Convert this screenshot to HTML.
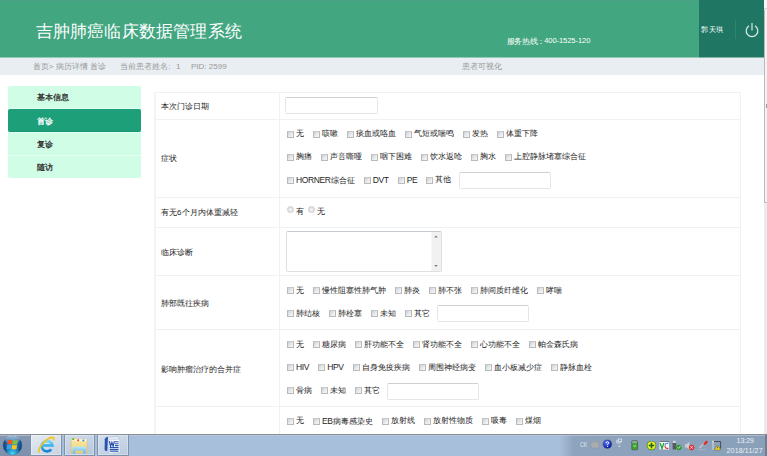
<!DOCTYPE html>
<html><head><meta charset="utf-8">
<style>
*{margin:0;padding:0;box-sizing:border-box}
html,body{width:767px;height:456px;overflow:hidden;background:#fff;font-family:"Liberation Sans",sans-serif;color:#333}
.a{position:absolute}
.t{position:absolute;font-size:8px;line-height:12px;white-space:nowrap;color:#1e1e1e}
#hdr{position:absolute;left:0;top:0;width:764px;height:57px;background:#42a681}
#title{position:absolute;left:35.5px;top:18.5px;font-size:17.45px;letter-spacing:.22px;line-height:24px;color:#fff;white-space:nowrap}
#hot{position:absolute;left:506.5px;top:35.6px;font-size:7.5px;line-height:12px;color:#fff;white-space:nowrap;letter-spacing:-.25px}
#hot2{position:absolute;left:544.2px;top:35.3px;font-size:7.5px;line-height:12px;color:#fff;white-space:nowrap;letter-spacing:-.05px}
#ubox{position:absolute;left:699px;top:0;width:65px;height:57px;background:#1f7763}
#uname{position:absolute;left:701.3px;top:24.3px;font-size:7px;letter-spacing:.35px;line-height:12px;color:#fff;white-space:nowrap}
#usep{position:absolute;left:735px;top:20px;width:1px;height:19px;background:#2f8370}
#bc{position:absolute;left:0;top:57px;width:764px;height:18px;background:#e8eef1}
.bct{position:absolute;top:60.5px;font-size:8px;line-height:12px;color:#999;white-space:nowrap}
.nav{position:absolute;left:8px;width:133px;height:22px;background:#d0fde6;border-radius:2px}
.nav span{position:absolute;left:29px;top:6px;font-size:8px;line-height:12px;font-weight:bold;color:#333;white-space:nowrap}
.nav.on{background:#1d9f7a}
.nav.on span{color:#fff}
#tbl{position:absolute;left:154px;top:91.5px;width:587px;height:400px;border:1px solid #f0f1f2;border-left:2px solid #f3f4f4}
.hl{position:absolute;left:155px;width:585px;height:1px;background:#f0f1f2}
#vl{position:absolute;left:279px;top:92px;width:1px;height:342px;background:#f0f1f2}
.cb{position:absolute;width:7px;height:7px;border:1px solid #bababa;border-top-color:#c6c6c6;background:linear-gradient(135deg,#cbcfd6 0%,#e6e8eb 50%,#f7f7f7 100%)}
.lt{font-weight:normal;font-size:8.5px;letter-spacing:-.38px;position:relative;top:-.5px}
.rd{position:absolute;width:7px;height:7px;border-radius:50%;border:1px solid #cdcdcd;background:radial-gradient(circle at 50% 55%,#f6f6f6 0,#e6e6e6 50%,#cfcfcf 100%)}
.inp{position:absolute;width:92px;height:17px;border:1px solid #e4e6e9;border-top-color:#cdd0d5;border-radius:2px;background:#fff}
#sb{position:absolute;left:764px;top:0;width:3px;height:434px;background:#ebebeb}
#task{position:absolute;left:0;top:434px;width:767px;height:22px;background:#a7bfda;border-top:1px solid #8a8d92}
.tbtn{position:absolute;top:434px;height:22px;border:1px solid #7f92ab;border-top-color:#8a8f96;border-radius:1.5px;background:linear-gradient(160deg,#e6ebf1,#c6d3e1);box-shadow:inset 0 0 0 .5px rgba(255,255,255,.6)}
</style></head><body>
<div id="hdr"></div>
<div class="a" style="left:0;top:0;width:699px;height:1px;background:#47a086"></div>
<div id="title">吉肿肺癌临床数据管理系统</div>
<div id="hot">服务热线</div><div id="hot" style="left:537.3px">：</div><div id="hot2">400-1525-120</div>
<div id="ubox"></div>
<div id="uname">郭天琪</div>
<div id="usep"></div>
<svg class="a" style="left:744px;top:22px" width="16" height="16" viewBox="0 0 16 16"><path d="M5 3.9 A5.8 5.8 0 1 0 11 3.9" fill="none" stroke="#d3e8e1" stroke-width="1.25"/><line x1="8" y1="1" x2="8" y2="8.4" stroke="#cfe6de" stroke-width="1.25"/></svg>
<div id="bc"></div>
<div class="a" style="left:0;top:57px;width:699px;height:1px;background:#95cab6"></div>
<div class="a" style="left:699px;top:57px;width:65px;height:1px;background:#84b3a9"></div>
<span class="bct" style="left:32.8px">首页&gt; 病历详情 首诊</span>
<span class="bct" style="left:120.2px">当前患者姓名:</span>
<span class="bct" style="left:176px">1</span>
<span class="bct" style="left:191px">PID: 2599</span>
<span class="bct" style="left:462px">患者可视化</span>

<div class="nav" style="top:86px;height:92px"></div>
<div class="a" style="left:8px;top:108px;width:133px;height:1px;background:#e2fef1"></div>
<div class="a" style="left:8px;top:132px;width:133px;height:1px;background:#e2fef1"></div>
<div class="a" style="left:8px;top:155px;width:133px;height:1px;background:#e6fff4"></div>
<div class="nav on" style="top:109px;height:23px;border-radius:2px;border-bottom:1px solid #189576"></div>
<div class="nav" style="top:86px;background:none"><span>基本信息</span></div>
<div class="nav on" style="top:109.5px;background:none"><span>首诊</span></div>
<div class="nav" style="top:133px;background:none"><span>复诊</span></div>
<div class="nav" style="top:156.3px;height:21.5px;background:none"><span>随访</span></div>

<div id="tbl"></div>
<div class="hl" style="top:119px"></div>
<div class="hl" style="top:197px"></div>
<div class="hl" style="top:227px"></div>
<div class="hl" style="top:275px"></div>
<div class="hl" style="top:329px"></div>
<div class="hl" style="top:406px"></div>
<div id="vl"></div>

<span class="t" style="left:161px;top:101.0px">本次门诊日期</span>
<span class="t" style="left:161px;top:153.0px">症状</span>
<span class="t" style="left:161px;top:207.0px">有无<b style="font-weight:normal;letter-spacing:1px">6</b>个月内体重减轻</span>
<span class="t" style="left:161px;top:247.0px">临床诊断</span>
<span class="t" style="left:161px;top:297.5px">肺部既往疾病</span>
<span class="t" style="left:161px;top:363.5px">影响肿瘤治疗的合并症</span>

<i class="inp" style="left:285px;top:97px;width:93px"></i>

<i class="rd" style="left:287px;top:205.8px"></i>
<span class="t" style="left:296px;top:206px">有</span>
<i class="rd" style="left:308px;top:205.8px"></i>
<span class="t" style="left:317px;top:206px">无</span>

<div class="a" style="left:285.5px;top:231px;width:156px;height:40.5px;border:1px solid #dcdfe4;border-top-color:#c5c9d1;border-radius:2px;background:#fff"></div>
<div class="a" style="left:431px;top:232px;width:10px;height:38.5px;background:#f1f1f1;border-left:1px solid #f7f7f7"></div>
<svg class="a" style="left:431px;top:233px" width="10" height="37" viewBox="0 0 10 37"><path d="M3.2 4.6 L5 2.6 L6.8 4.6 Z" fill="#7a7a7a"/><path d="M3.2 32 L5 34 L6.8 32 Z" fill="#7a7a7a"/></svg>

<i class="cb" style="left:287.0px;top:130.8px"></i>
<span class="t" style="left:296.0px;top:128.3px">无</span>
<i class="cb" style="left:313.0px;top:130.8px"></i>
<span class="t" style="left:322.0px;top:128.3px">咳嗽</span>
<i class="cb" style="left:347.0px;top:130.8px"></i>
<span class="t" style="left:356.0px;top:128.3px">痰血或咯血</span>
<i class="cb" style="left:405.0px;top:130.8px"></i>
<span class="t" style="left:414.0px;top:128.3px">气短或喘鸣</span>
<i class="cb" style="left:463.0px;top:130.8px"></i>
<span class="t" style="left:472.0px;top:128.3px">发热</span>
<i class="cb" style="left:497.0px;top:130.8px"></i>
<span class="t" style="left:506.0px;top:128.3px">体重下降</span>
<i class="cb" style="left:287.0px;top:153.7px"></i>
<span class="t" style="left:296.0px;top:151.2px">胸痛</span>
<i class="cb" style="left:321.0px;top:153.7px"></i>
<span class="t" style="left:330.0px;top:151.2px">声音嘶哑</span>
<i class="cb" style="left:371.0px;top:153.7px"></i>
<span class="t" style="left:380.0px;top:151.2px">咽下困难</span>
<i class="cb" style="left:421.0px;top:153.7px"></i>
<span class="t" style="left:430.0px;top:151.2px">饮水返呛</span>
<i class="cb" style="left:471.0px;top:153.7px"></i>
<span class="t" style="left:480.0px;top:151.2px">胸水</span>
<i class="cb" style="left:505.0px;top:153.7px"></i>
<span class="t" style="left:514.0px;top:151.2px">上腔静脉堵塞综合征</span>
<i class="cb" style="left:287.0px;top:176.7px"></i>
<span class="t" style="left:296.0px;top:174.2px"><b class="lt">HORNER</b>综合征</span>
<i class="cb" style="left:363.7px;top:176.7px"></i>
<span class="t" style="left:372.7px;top:174.2px"><b class="lt">DVT</b></span>
<i class="cb" style="left:397.7px;top:176.7px"></i>
<span class="t" style="left:406.7px;top:174.2px"><b class="lt">PE</b></span>
<i class="cb" style="left:426.3px;top:176.7px"></i>
<span class="t" style="left:435.3px;top:174.2px">其他</span>
<i class="inp" style="left:458.6px;top:172.0px"></i>
<i class="cb" style="left:287.0px;top:287.0px"></i>
<span class="t" style="left:296.0px;top:284.5px">无</span>
<i class="cb" style="left:313.0px;top:287.0px"></i>
<span class="t" style="left:322.0px;top:284.5px">慢性阻塞性肺气肿</span>
<i class="cb" style="left:395.0px;top:287.0px"></i>
<span class="t" style="left:404.0px;top:284.5px">肺炎</span>
<i class="cb" style="left:429.0px;top:287.0px"></i>
<span class="t" style="left:438.0px;top:284.5px">肺不张</span>
<i class="cb" style="left:471.0px;top:287.0px"></i>
<span class="t" style="left:480.0px;top:284.5px">肺间质纤维化</span>
<i class="cb" style="left:537.0px;top:287.0px"></i>
<span class="t" style="left:546.0px;top:284.5px">哮喘</span>
<i class="cb" style="left:287.0px;top:310.0px"></i>
<span class="t" style="left:296.0px;top:307.5px">肺结核</span>
<i class="cb" style="left:329.0px;top:310.0px"></i>
<span class="t" style="left:338.0px;top:307.5px">肺栓塞</span>
<i class="cb" style="left:371.0px;top:310.0px"></i>
<span class="t" style="left:380.0px;top:307.5px">未知</span>
<i class="cb" style="left:405.0px;top:310.0px"></i>
<span class="t" style="left:414.0px;top:307.5px">其它</span>
<i class="inp" style="left:437.3px;top:305.3px"></i>
<i class="cb" style="left:287.0px;top:341.2px"></i>
<span class="t" style="left:296.0px;top:338.7px">无</span>
<i class="cb" style="left:313.0px;top:341.2px"></i>
<span class="t" style="left:322.0px;top:338.7px">糖尿病</span>
<i class="cb" style="left:355.0px;top:341.2px"></i>
<span class="t" style="left:364.0px;top:338.7px">肝功能不全</span>
<i class="cb" style="left:413.0px;top:341.2px"></i>
<span class="t" style="left:422.0px;top:338.7px">肾功能不全</span>
<i class="cb" style="left:471.0px;top:341.2px"></i>
<span class="t" style="left:480.0px;top:338.7px">心功能不全</span>
<i class="cb" style="left:529.0px;top:341.2px"></i>
<span class="t" style="left:538.0px;top:338.7px">帕金森氏病</span>
<i class="cb" style="left:287.0px;top:364.0px"></i>
<span class="t" style="left:296.0px;top:361.5px"><b class="lt">HIV</b></span>
<i class="cb" style="left:318.3px;top:364.0px"></i>
<span class="t" style="left:327.3px;top:361.5px"><b class="lt">HPV</b></span>
<i class="cb" style="left:352.8px;top:364.0px"></i>
<span class="t" style="left:361.8px;top:361.5px">自身免疫疾病</span>
<i class="cb" style="left:418.8px;top:364.0px"></i>
<span class="t" style="left:427.8px;top:361.5px">周围神经病变</span>
<i class="cb" style="left:484.8px;top:364.0px"></i>
<span class="t" style="left:493.8px;top:361.5px">血小板减少症</span>
<i class="cb" style="left:550.8px;top:364.0px"></i>
<span class="t" style="left:559.8px;top:361.5px">静脉血栓</span>
<i class="cb" style="left:287.0px;top:387.3px"></i>
<span class="t" style="left:296.0px;top:384.8px">骨病</span>
<i class="cb" style="left:321.0px;top:387.3px"></i>
<span class="t" style="left:330.0px;top:384.8px">未知</span>
<i class="cb" style="left:355.0px;top:387.3px"></i>
<span class="t" style="left:364.0px;top:384.8px">其它</span>
<i class="inp" style="left:387.3px;top:382.6px"></i>
<i class="cb" style="left:287.0px;top:417.8px"></i>
<span class="t" style="left:296.0px;top:415.3px">无</span>
<i class="cb" style="left:313.0px;top:417.8px"></i>
<span class="t" style="left:322.0px;top:415.3px"><b class="lt">EB</b>病毒感染史</span>
<i class="cb" style="left:381.7px;top:417.8px"></i>
<span class="t" style="left:390.7px;top:415.3px">放射线</span>
<i class="cb" style="left:423.7px;top:417.8px"></i>
<span class="t" style="left:432.7px;top:415.3px">放射性物质</span>
<i class="cb" style="left:481.7px;top:417.8px"></i>
<span class="t" style="left:490.7px;top:415.3px">吸毒</span>
<i class="cb" style="left:515.7px;top:417.8px"></i>
<span class="t" style="left:524.7px;top:415.3px">煤烟</span>

<div id="sb"></div>
<div class="a" style="left:764px;top:0;width:3px;height:9px;background:#f6f6f6;border-bottom:1px solid #dadada"></div>
<div class="a" style="left:764px;top:10px;width:3px;height:193px;background:#f3f3f3;border-left:1px solid #b9b9b9;border-bottom:1px solid #bdbdbd"></div>
<div class="a" style="left:766px;top:104px;width:1px;height:4px;background:#9a9a9a"></div>
<div id="task"></div>
<div class="a" style="left:0;top:435px;width:30px;height:21px;background:linear-gradient(#8597b1,#7e91ac)"></div>
<div class="a" style="left:560px;top:435px;width:207px;height:21px;background:linear-gradient(90deg,#a7bedb 0px,#8ea3bd 14px,#8a9fb8 100%)"></div>
<div class="a" style="left:0;top:435px;width:767px;height:1px;background:#c3cfdd;opacity:.6"></div>
<svg class="a" style="left:0px;top:435px" width="26" height="21" viewBox="0 0 26 21">
<defs>
<radialGradient id="orb" cx="50%" cy="45%" r="55%"><stop offset="0" stop-color="#3f8fcc"/><stop offset=".65" stop-color="#1a5d9e"/><stop offset="1" stop-color="#0b3566"/></radialGradient>
<radialGradient id="glow" cx="50%" cy="100%" r="50%"><stop offset="0" stop-color="#5ff6ff"/><stop offset=".6" stop-color="#2ab8ee" stop-opacity=".6"/><stop offset="1" stop-color="#2ab8ee" stop-opacity="0"/></radialGradient>
<linearGradient id="hi" x1="0" y1="0" x2="0" y2="1"><stop offset="0" stop-color="#c9dcef" stop-opacity=".75"/><stop offset="1" stop-color="#fff" stop-opacity="0"/></linearGradient>
</defs>
<circle cx="12.5" cy="10.4" r="9.8" fill="#7388a6"/>
<circle cx="12.5" cy="10.4" r="9.4" fill="url(#orb)"/>
<circle cx="12.5" cy="10.4" r="9.4" fill="url(#glow)"/>
<ellipse cx="12.5" cy="5" rx="7.4" ry="4.4" fill="url(#hi)"/>
<path d="M7.8 5.4 Q10 4.4 12.4 5.2 L11.8 9.3 Q9.6 8.6 7.2 9.5 Z" fill="#f0561d"/>
<path d="M12.9 5.3 Q15.2 6 17.8 5 L17.2 9.2 Q14.8 10 12.3 9.3 Z" fill="#82c23e"/>
<path d="M7.1 10.1 Q9.4 9.2 11.7 10 L11.1 14.1 Q8.8 13.3 6.5 14.2 Z" fill="#3aa4e8"/>
<path d="M12.2 10 Q14.6 10.8 17.1 9.8 L16.5 14.1 Q14 14.9 11.6 14.1 Z" fill="#fdc21d"/>
</svg>
<div class="tbtn" style="left:30px;width:31.5px"></div>
<div class="tbtn" style="left:63.7px;width:31.6px;background:linear-gradient(160deg,#cfdbe8,#b6c8de)"></div>
<div class="tbtn" style="left:97px;width:31.5px;background:linear-gradient(160deg,#d3dfec,#b9cbe0)"></div>
<svg class="a" style="left:37px;top:436px" width="18" height="19" viewBox="0 0 18 19">
<defs><linearGradient id="ieb" x1="0" y1="0" x2="0" y2="1"><stop offset="0" stop-color="#7fd6fa"/><stop offset=".5" stop-color="#34b0ee"/><stop offset="1" stop-color="#1a7fd0"/></linearGradient></defs>
<path d="M4.8 9.3 H15.4 A5.4 5.2 0 1 0 14.3 13.3" fill="none" stroke="url(#ieb)" stroke-width="2.7"/>
<path d="M2.2 16.6 Q0.6 14 5.2 8.2 Q10.6 1.8 15.2 1.4 Q17.6 1.3 16.6 4.4" fill="none" stroke="#f3c316" stroke-width="1.6"/>
</svg>
<svg class="a" style="left:70px;top:436px" width="19" height="19" viewBox="0 0 19 19">
<defs><linearGradient id="fy" x1="0" y1="0" x2="0" y2="1"><stop offset="0" stop-color="#f9e8a8"/><stop offset="1" stop-color="#efd270"/></linearGradient>
<linearGradient id="ft" x1="0" y1="0" x2="0" y2="1"><stop offset="0" stop-color="#b6e4f7"/><stop offset="1" stop-color="#68b8e4"/></linearGradient></defs>
<path d="M1.2 2.6 H7.2 L8.4 3.8 H17 V17 H1.2 Z" fill="url(#fy)" stroke="#d9b85c" stroke-width=".5"/>
<rect x="1.6" y="3.2" width="15" height="1.8" fill="#fdf6d8"/>
<circle cx="3.2" cy="3.3" r="1" fill="#27c42a"/><circle cx="8.2" cy="4.2" r="1" fill="#e2432c"/><circle cx="13.4" cy="4.6" r="1" fill="#2a90e4"/>
<path d="M2.6 10.6 H16 V17.6 H13 V14.8 H5.6 V17.6 H2.6 Z" fill="url(#ft)"/>
</svg>
<svg class="a" style="left:102px;top:435px" width="20" height="20" viewBox="0 0 20 20">
<path d="M5.4 2.2 L16.6 1.4 L17.2 15.6 L6 16.6 Z" fill="#e4ebf5" stroke="#a9b8cf" stroke-width=".5"/>
<path d="M2.8 4.2 Q3.6 1.6 6 2 L5.2 16 Q3.2 16.4 2.6 14.4 Z" fill="#2a52b0"/>
<path d="M6.6 4.8 L17.6 4.2 L18 17.4 L7 18.2 Z" fill="#fbfcfe" stroke="#b3c0d5" stroke-width=".5"/>
<path d="M7.4 6.2 L8.6 11.4 L9.9 7.4 L11.2 11.4 L12.4 6.2" fill="none" stroke="#2650ad" stroke-width="1.2"/>
<path d="M13 6.8 H16.6 M13 8.7 H16.6 M13 10.6 H16.6 M7.6 12.6 H16.6 M7.6 14.4 H16.6 M7.8 16.1 H16.4" stroke="#2a55b0" stroke-width="1.05"/>
</svg>
<span class="a" style="left:579.5px;top:440px;font-size:6.5px;line-height:9px;color:#dfe5ec;transform:scaleX(.8);transform-origin:0 0">CK</span>
<svg class="a" style="left:590px;top:439px" width="10" height="10" viewBox="0 0 10 10"><rect x=".8" y="3" width="8.4" height="6" rx="1" fill="#a9acb1" stroke="#8e939a" stroke-width=".5"/><path d="M5 3 Q6 1 8.6 0.8" fill="none" stroke="#a0a4aa" stroke-width=".7"/></svg>
<svg class="a" style="left:602px;top:439px" width="11" height="11" viewBox="0 0 11 11"><defs><radialGradient id="hb" cx="40%" cy="35%" r="65%"><stop offset="0" stop-color="#5b7dff"/><stop offset="1" stop-color="#0a18a8"/></radialGradient></defs><circle cx="5.4" cy="5.2" r="4.8" fill="#6c717a"/><circle cx="5.4" cy="5.2" r="4.1" fill="url(#hb)"/><path d="M4.1 4 Q4.1 2.7 5.4 2.7 Q6.8 2.7 6.8 3.9 Q6.8 4.8 5.5 5.3 V6.1" fill="none" stroke="#fff" stroke-width="1"/><circle cx="5.5" cy="7.5" r=".6" fill="#fff"/></svg>
<svg class="a" style="left:616px;top:438px" width="7" height="11" viewBox="0 0 7 11"><rect x=".9" y="2.2" width="3.4" height="2.8" fill="none" stroke="#dfe4ea" stroke-width=".8"/><rect x="2.3" y="1" width="3.4" height="2.6" fill="#8b9fb8" stroke="#dfe4ea" stroke-width=".8"/><path d="M2 7.8 L4.6 7.8 L3.3 9.2 Z" fill="#e6ebf0"/></svg>
<svg class="a" style="left:631px;top:440px" width="8" height="11" viewBox="0 0 8 11"><rect x=".8" y=".8" width="5.8" height="9" rx=".6" fill="#3da533" stroke="#3f4a44" stroke-width=".6"/><rect x="1.2" y="1.1" width="5" height="2" fill="#9aa4a6"/><path d="M2.4 5 L3.7 7 L5 5" fill="none" stroke="#b8f0a0" stroke-width=".7"/></svg>
<svg class="a" style="left:646px;top:440px" width="11" height="11" viewBox="0 0 11 11"><circle cx="5.5" cy="5.6" r="4.7" fill="#1f8d2a"/><circle cx="5.5" cy="5.4" r="4" fill="#f0e81e"/><path d="M5.5 2.8 V8.2 M2.8 5.5 H8.2" stroke="#17651e" stroke-width="1.5"/></svg>
<svg class="a" style="left:659px;top:441px" width="11" height="9" viewBox="0 0 11 9"><rect x=".5" y=".5" width="9.5" height="8" fill="#fbfbfb"/><rect x=".5" y=".2" width="9.5" height=".8" fill="#5a5f66"/><path d="M1.2 2 L3 7.8 L4.8 2" fill="none" stroke="#26a23a" stroke-width="1.3"/><path d="M9.4 2.4 Q6 1.6 6 4.8" fill="none" stroke="#3a7ed8" stroke-width="1.1"/><path d="M6 5 Q6 8 9.4 7.2" fill="none" stroke="#e0303a" stroke-width="1.1"/></svg>
<svg class="a" style="left:672px;top:440px" width="11" height="11" viewBox="0 0 11 11"><rect x="1.2" y=".8" width="2.4" height="2.4" fill="#d8dbe0"/><rect x=".6" y="3" width="3.6" height="6.4" rx=".6" fill="#55595f"/><circle cx="6.9" cy="7.5" r="2.7" fill="#2a9b2e"/><path d="M5.6 7.4 L6.6 8.4 L8.4 6" fill="none" stroke="#e8ffe8" stroke-width=".8"/></svg>
<svg class="a" style="left:684px;top:440px" width="11" height="11" viewBox="0 0 11 11"><path d="M1 4 H2.8 L5.4 1.8 V9.4 L2.8 7.4 H1 Z" fill="#c9ccd1"/><circle cx="7.6" cy="7.5" r="2.7" fill="#e0312f"/><path d="M6.4 6.2 L8.8 8.6 M8.8 6.2 L6.4 8.6" stroke="#fff" stroke-width=".8"/></svg>
<svg class="a" style="left:697px;top:440px" width="12" height="11" viewBox="0 0 12 11"><path d="M2.4 8 L8 2.2" stroke="#c3c7cd" stroke-width="1.5"/><path d="M6 4.2 L8.6 1 Q10.4 .4 10.8 2.2 L8.4 5 Z" fill="#de2a2a"/><path d="M1 9.4 Q4.5 10.6 8.5 9" fill="none" stroke="#b4b9c0" stroke-width=".8"/></svg>
<svg class="a" style="left:711px;top:440px" width="11" height="11" viewBox="0 0 11 11"><path d="M2 1.5 H9.6 V8.5" fill="none" stroke="#3d454e" stroke-width=".9"/><path d="M2 1.2 V9.8" stroke="#d6dae0" stroke-width="1"/><circle cx="2" cy="1.6" r="1" fill="#d6dae0"/><path d="M6.6 5 L9.8 10 H3.4 Z" fill="#f4d61a" stroke="#5b5a2a" stroke-width=".4"/><path d="M6.6 6.6 V8.4" stroke="#222" stroke-width=".6"/></svg>
<span class="a" style="left:736.5px;top:436.5px;font-size:7px;line-height:8px;color:#eef2f6;white-space:nowrap">13:29</span>
<span class="a" style="left:726.5px;top:446.5px;font-size:7px;line-height:8px;color:#eef2f6;white-space:nowrap;letter-spacing:.17px">2018/11/27</span>
<div class="a" style="left:765px;top:435px;width:2px;height:21px;background:#6d7f96"></div>
</body></html>
